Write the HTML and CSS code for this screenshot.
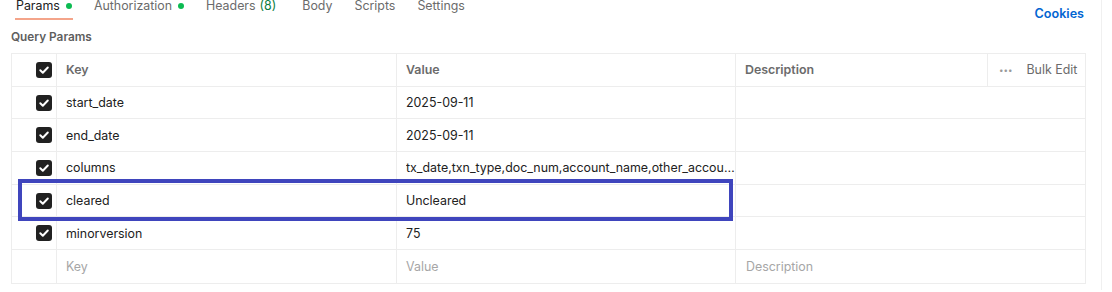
FILE: index.html
```html
<!DOCTYPE html>
<html>
<head>
<meta charset="utf-8">
<link rel="stylesheet" href="styles.css">
</head>
<body>
<div class="panel">
  <div class="topbar">
    <div class="tabs">
      <div class="tab active">Params <span class="dot"></span></div>
      <div class="tab">Authorization <span class="dot"></span></div>
      <div class="tab">Headers <span class="count">(8)</span></div>
      <div class="tab">Body</div>
      <div class="tab">Scripts</div>
      <div class="tab">Settings</div>
    </div>
    <div class="cookies">Cookies</div>
  </div>
  <div class="section-title">Query Params</div>
  <div class="table-wrap">
    <div class="table">
      <div class="cell chk"><span class="box"><svg viewBox="0 0 16 16" width="16" height="16"><path d="M4.3 8.3l2.5 2.4 5-5.2" fill="none" stroke="#fff" stroke-width="2" stroke-linecap="round" stroke-linejoin="round"/></svg></span></div>
      <div class="cell head">Key</div>
      <div class="cell head">Value</div>
      <div class="cell head">Description</div>
      <div class="cell head bulk"><span class="dots">•••</span>Bulk Edit</div>

      <div class="cell chk"><span class="box"><svg viewBox="0 0 16 16" width="16" height="16"><path d="M4.3 8.3l2.5 2.4 5-5.2" fill="none" stroke="#fff" stroke-width="2" stroke-linecap="round" stroke-linejoin="round"/></svg></span></div>
      <div class="cell">start_date</div>
      <div class="cell">2025-09-11</div>
      <div class="cell desc"></div>

      <div class="cell chk"><span class="box"><svg viewBox="0 0 16 16" width="16" height="16"><path d="M4.3 8.3l2.5 2.4 5-5.2" fill="none" stroke="#fff" stroke-width="2" stroke-linecap="round" stroke-linejoin="round"/></svg></span></div>
      <div class="cell">end_date</div>
      <div class="cell">2025-09-11</div>
      <div class="cell desc"></div>

      <div class="cell chk"><span class="box"><svg viewBox="0 0 16 16" width="16" height="16"><path d="M4.3 8.3l2.5 2.4 5-5.2" fill="none" stroke="#fff" stroke-width="2" stroke-linecap="round" stroke-linejoin="round"/></svg></span></div>
      <div class="cell">columns</div>
      <div class="cell"><span class="trunc">tx_date,txn_type,doc_num,account_name,other_account,memo</span></div>
      <div class="cell desc"></div>

      <div class="cell chk"><span class="box"><svg viewBox="0 0 16 16" width="16" height="16"><path d="M4.3 8.3l2.5 2.4 5-5.2" fill="none" stroke="#fff" stroke-width="2" stroke-linecap="round" stroke-linejoin="round"/></svg></span></div>
      <div class="cell">cleared</div>
      <div class="cell">Uncleared</div>
      <div class="cell desc"></div>

      <div class="cell chk"><span class="box"><svg viewBox="0 0 16 16" width="16" height="16"><path d="M4.3 8.3l2.5 2.4 5-5.2" fill="none" stroke="#fff" stroke-width="2" stroke-linecap="round" stroke-linejoin="round"/></svg></span></div>
      <div class="cell">minorversion</div>
      <div class="cell">75</div>
      <div class="cell desc"></div>

      <div class="cell chk last"></div>
      <div class="cell ph last">Key</div>
      <div class="cell ph last">Value</div>
      <div class="cell ph desc last">Description</div>
    </div>
    <div class="highlight"></div>
  </div>
</div>
</body>
</html>
```

FILE: styles.css
```css
* { box-sizing: border-box; }
html, body { margin: 0; padding: 0; background: #fff; }
body {
  width: 1112px;
  height: 292px;
  overflow: hidden;
  font-family: Inter, "Noto Sans", sans-serif;
  font-size: 12.4px;
  color: #212121;
}
.panel {
  width: 1102px;
  height: 292px;
  border-right: 1px solid #f0f0f0;
  padding: 0 15px 0 11px;
}
.topbar {
  display: flex;
  justify-content: space-between;
  align-items: flex-start;
  margin-top: -2px;
}
.tabs {
  display: flex;
  gap: 20px;
  padding-left: 4px;
}
.tab {
  line-height: 16px;
  padding: 0 1px 4px 1px;
  border-bottom: 2px solid transparent;
  color: #6b6b6b;
  display: flex;
  align-items: center;
  gap: 6px;
  white-space: nowrap;
}
.tab:nth-child(3) { margin-right: 4px; }
.tab.active {
  color: #212121;
  border-bottom-color: #f4a48a;
}
.dot {
  width: 6px;
  height: 6px;
  border-radius: 50%;
  background: #0cbb52;
  display: inline-block;
}
.count { color: #0c7e3e; margin-left: -2px; }
.cookies {
  color: #0265d2;
  font-weight: 600;
  font-size: 12.6px;
  line-height: 16px;
  margin-top: 8px;
  margin-right: 2px;
}
.section-title {
  font-size: 11.8px;
  font-weight: 600;
  color: #5e5e5e;
  line-height: 16px;
  margin-top: 7px;
}
.table-wrap {
  position: relative;
  margin-top: 8px;
}
.table {
  display: grid;
  grid-template-columns: 45px 340px 339px 252px 1fr;
  grid-auto-rows: 32.7px;
  border: 1px solid #ededed;
}
.cell {
  border-right: 1px solid #ededed;
  border-bottom: 1px solid #ededed;
  display: flex;
  align-items: center;
  padding-left: 9px;
  white-space: nowrap;
  overflow: hidden;
}
.cell.last { border-bottom: none; }
.cell.desc { grid-column: 4 / 6; border-right: none; padding-left: 10px; }
.cell.bulk { border-right: none; padding-left: 11px; }
.cell.head { font-weight: 600; color: #6b6b6b; }
.cell.head.bulk { font-weight: 400; }
.dots {
  font-size: 8px;
  color: #9a9a9a;
  margin-right: 14px;
}
.chk {
  justify-content: flex-end;
  padding: 0 4px 0 0;
}
.box {
  width: 16px;
  height: 16px;
  border-radius: 3px;
  background: #212121;
  display: flex;
}
.trunc {
  display: block;
  max-width: 330px;
  overflow: hidden;
  text-overflow: ellipsis;
}
.ph { color: #a6a6a6; }
.highlight {
  position: absolute;
  left: 7px;
  top: 126px;
  width: 715px;
  height: 42px;
  border: 4px solid #3f45bd;
  pointer-events: none;
}
```
